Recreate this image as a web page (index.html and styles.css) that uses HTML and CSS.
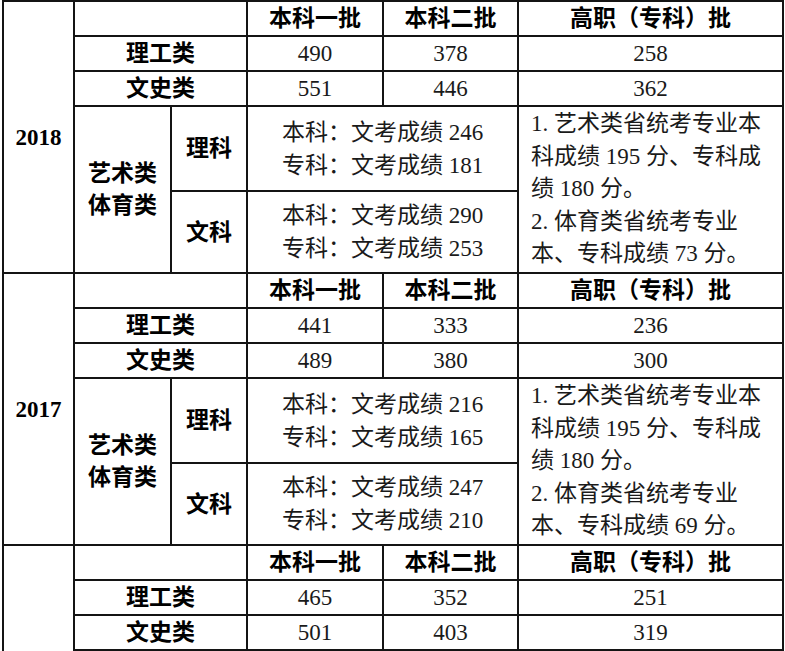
FILE: index.html
```html
<!DOCTYPE html>
<html lang="zh-CN">
<head>
<meta charset="utf-8">
<title>录取控制分数线</title>
<link rel="stylesheet" href="styles.css">
</head>
<body>
<table class="scores">
  <colgroup>
    <col class="c-year"><col class="c-cat"><col class="c-sub"><col class="c-b1"><col class="c-b2"><col class="c-vo">
  </colgroup>
  <tbody>
    <tr class="r-head">
      <td class="year" rowspan="5">2018</td>
      <td colspan="2"></td>
      <th>本科一批</th><th>本科二批</th><th>高职（专科）批</th>
    </tr>
    <tr class="r-main">
      <th colspan="2">理工类</th><td>490</td><td>378</td><td>258</td>
    </tr>
    <tr class="r-main2">
      <th colspan="2">文史类</th><td>551</td><td>446</td><td>362</td>
    </tr>
    <tr class="r-art1">
      <th class="art" rowspan="2">艺术类<br>体育类</th>
      <th>理科</th>
      <td colspan="2"><span class="ln">本科：文考成绩 246</span><span class="ln">专科：文考成绩 181</span></td>
      <td class="note" rowspan="2"><span class="ln">1. 艺术类省统考专业本</span><span class="ln">科成绩 195 分、专科成</span><span class="ln">绩 180 分。</span><span class="ln">2. 体育类省统考专业</span><span class="ln">本、专科成绩 73 分。</span></td>
    </tr>
    <tr class="r-art2">
      <th>文科</th>
      <td colspan="2"><span class="ln">本科：文考成绩 290</span><span class="ln">专科：文考成绩 253</span></td>
    </tr>

    <tr class="r-head">
      <td class="year" rowspan="5">2017</td>
      <td colspan="2"></td>
      <th>本科一批</th><th>本科二批</th><th>高职（专科）批</th>
    </tr>
    <tr class="r-main">
      <th colspan="2">理工类</th><td>441</td><td>333</td><td>236</td>
    </tr>
    <tr class="r-main2">
      <th colspan="2">文史类</th><td>489</td><td>380</td><td>300</td>
    </tr>
    <tr class="r-art1">
      <th class="art" rowspan="2">艺术类<br>体育类</th>
      <th>理科</th>
      <td colspan="2"><span class="ln">本科：文考成绩 216</span><span class="ln">专科：文考成绩 165</span></td>
      <td class="note" rowspan="2"><span class="ln">1. 艺术类省统考专业本</span><span class="ln">科成绩 195 分、专科成</span><span class="ln">绩 180 分。</span><span class="ln">2. 体育类省统考专业</span><span class="ln">本、专科成绩 69 分。</span></td>
    </tr>
    <tr class="r-art2">
      <th>文科</th>
      <td colspan="2"><span class="ln">本科：文考成绩 247</span><span class="ln">专科：文考成绩 210</span></td>
    </tr>

    <tr class="r-head">
      <td class="year" rowspan="5">2016</td>
      <td colspan="2"></td>
      <th>本科一批</th><th>本科二批</th><th>高职（专科）批</th>
    </tr>
    <tr class="r-main">
      <th colspan="2">理工类</th><td>465</td><td>352</td><td>251</td>
    </tr>
    <tr class="r-main2">
      <th colspan="2">文史类</th><td>501</td><td>403</td><td>319</td>
    </tr>
    <tr class="r-art1">
      <th class="art" rowspan="2">艺术类<br>体育类</th>
      <th>理科</th>
      <td colspan="2"></td>
      <td class="note" rowspan="2"></td>
    </tr>
    <tr class="r-art2">
      <th>文科</th>
      <td colspan="2"></td>
    </tr>
  </tbody>
</table>
</body>
</html>
```

FILE: styles.css
```css
html, body {
  margin: 0;
  padding: 0;
  background: #ffffff;
}

body {
  font-family: "Liberation Serif", "Noto Sans CJK SC", serif;
  font-size: 23px;
  color: #1a1a1a;
}

.scores {
  border-collapse: collapse;
  table-layout: fixed;
  width: 782px;
  margin: 0 0 0 2px;
}

.c-year { width: 71px; }
.c-cat  { width: 97px; }
.c-sub  { width: 76px; }
.c-b1   { width: 136px; }
.c-b2   { width: 135px; }
.c-vo   { width: 265px; }

.scores td,
.scores th {
  border: 2px solid #141414;
  padding: 0;
  text-align: center;
  vertical-align: middle;
  line-height: 33px;
  font-weight: normal;
  white-space: nowrap;
}

.scores th {
  font-weight: bold;
  color: #000;
}

.r-head  { height: 33px; }
.r-main  { height: 34px; }
.r-main2 { height: 34px; }
.r-art1  { height: 85px; }
.r-art2  { height: 82px; }

.scores td.year {
  font-weight: bold;
  color: #000;
}

.scores th.art {
  line-height: 32px;
}

.ln {
  display: block;
}

.scores td.note {
  text-align: left;
  padding-left: 12px;
  line-height: 32.5px;
}
```
